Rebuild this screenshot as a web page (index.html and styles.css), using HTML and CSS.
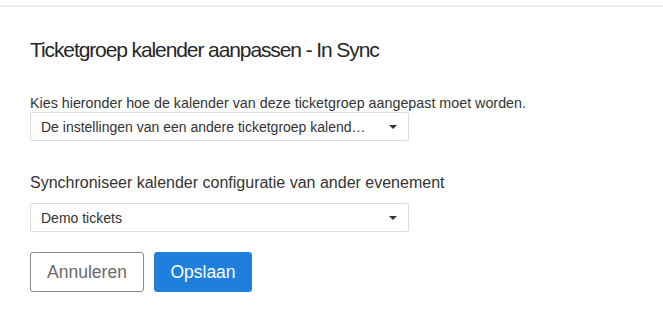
FILE: index.html
```html
<!DOCTYPE html>
<html lang="nl">
<head>
    <meta charset="UTF-8">
    <meta name="viewport" content="width=device-width, initial-scale=1.0">
    <title>Ticketgroep kalender aanpassen</title>
    <link rel="stylesheet" href="styles.css">
</head>
<body>
    <!-- bovenste lijn -->
    <div class="topline"></div>

    <div class="panel">
        <h1 class="title">Ticketgroep kalender aanpassen - In Sync</h1>

        <div class="field">
            <label class="label">Kies hieronder hoe de kalender van deze ticketgroep aangepast moet worden.</label>
            <div class="select">
                <span class="select-text">De instellingen van een andere ticketgroep kalender overnemen</span>
                <span class="caret"></span>
            </div>
        </div>

        <div class="field field-sync">
            <label class="label label-big">Synchroniseer kalender configuratie van ander evenement</label>
            <div class="select">
                <span class="select-text">Demo tickets</span>
                <span class="caret"></span>
            </div>
        </div>

        <div class="actions">
            <button class="btn btn-cancel">Annuleren</button>
            <button class="btn btn-save">Opslaan</button>
        </div>
    </div>
</body>
</html>
```

FILE: styles.css
```css
*{
    margin: 0;
    padding: 0;
    box-sizing: border-box;
}
body{
    background: #fff;
    font-family: "Liberation Sans", Arial, sans-serif;
    color: #333;
}
.topline{
    margin-top: 5px;
    height: 2px;
    background: #ececec;
}
.panel{
    padding: 30px 0 0 30px;
}
.title{
    font-size: 21px;
    font-weight: normal;
    line-height: 26px;
    letter-spacing: -1.1px;
    color: #262626;
}
.field{
    margin-top: 31px;
    width: 379px;
}
.label{
    display: block;
    font-size: 14.3px;
    line-height: 18px;
    white-space: nowrap;
    color: #333;
}
.label-big{
    font-size: 16px;
    line-height: 22px;
    margin-bottom: 9px;
}
.field-sync{
    margin-top: 31px;
}
.select{
    display: flex;
    align-items: center;
    height: 29px;
    border: 1px solid #dcdcdc;
    border-radius: 2px;
    padding: 0 11px 0 10px;
}
.select-text{
    flex: 1;
    font-size: 14px;
    color: #333;
    white-space: nowrap;
    overflow: hidden;
    text-overflow: ellipsis;
    padding-right: 16px;
}
.caret{
    width: 0;
    height: 0;
    border-left: 4px solid transparent;
    border-right: 4px solid transparent;
    border-top: 4px solid #333;
}
.actions{
    display: flex;
    gap: 10px;
    margin-top: 20px;
}
.btn{
    height: 40px;
    font-family: "Liberation Sans", Arial, sans-serif;
    font-size: 17.5px;
    border-radius: 3px;
    cursor: pointer;
}
.btn-cancel{
    width: 114px;
    background: #fff;
    border: 1px solid #8a8a8a;
    color: #6b6b6b;
}
.btn-save{
    width: 98px;
    background: #1e80dc;
    border: 1px solid #1e80dc;
    color: #fff;
}
```
